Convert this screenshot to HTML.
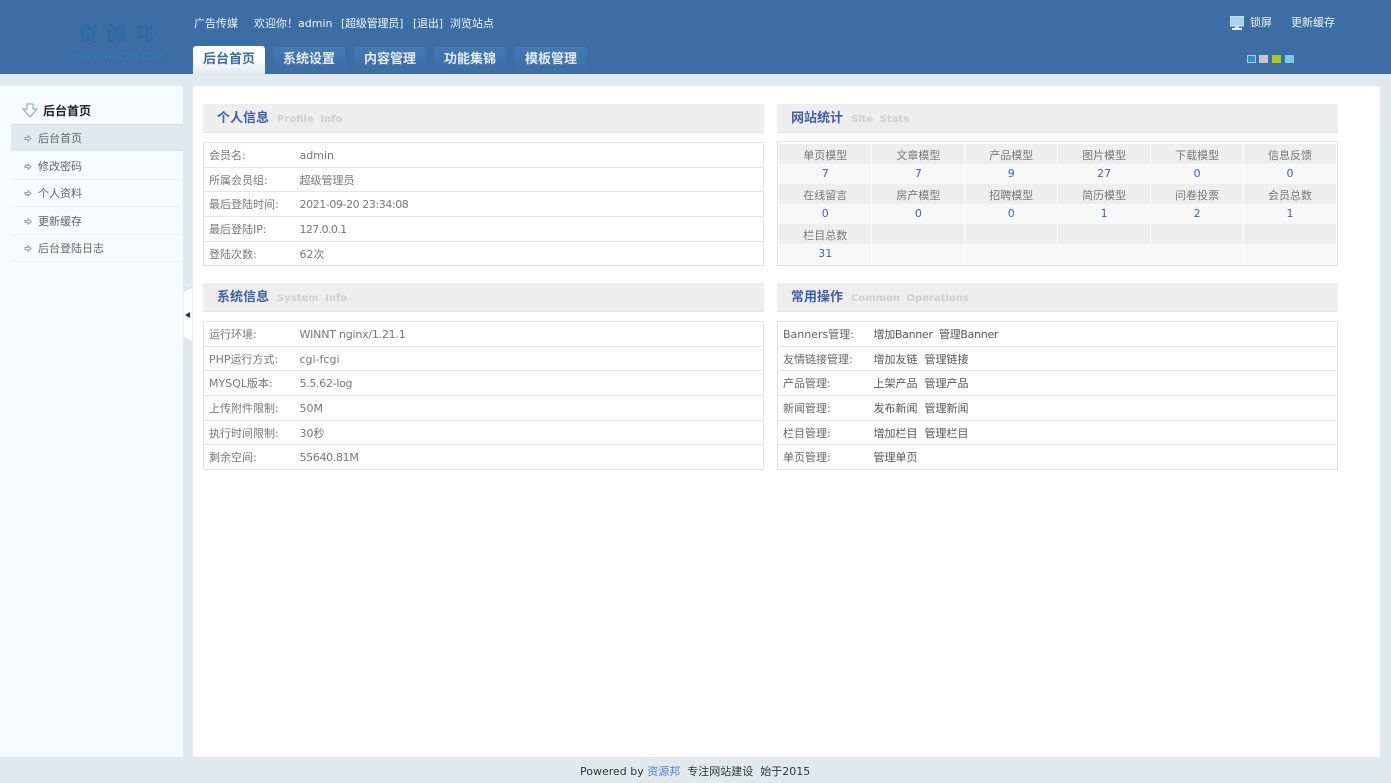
<!DOCTYPE html>
<html lang="zh"><head><meta charset="utf-8"><title>后台首页</title>
<style>
*{margin:0;padding:0;box-sizing:border-box}
html,body{width:1391px;height:783px;overflow:hidden;background:#e2e9ec}
body{position:relative;font:11px/16px "DejaVu Sans","WenQuanYi Zen Hei","Noto Sans CJK SC",sans-serif;color:#666}
.a{position:absolute;white-space:nowrap}
#top{left:0;top:0;width:1391px;height:74px;background:#3c6ea5}
.w{color:#eef3f8}
.tab{position:absolute;top:47px;height:27px;width:72px;border-radius:3px 3px 0 0;background:linear-gradient(#4479b2,#3a6ea4);color:#e4edf5;font-weight:bold;font-size:13px;line-height:26px;text-align:center}
.tab.on{top:46px;height:28px;background:linear-gradient(#fff 45%,#e2e9ec);color:#3c6ea5;line-height:27px}
#side{left:0;top:86px;width:183px;height:671px;background:#f7fbfd}
#main{left:193px;top:86px;width:1187px;height:671px;background:#fff}
.m{position:absolute;left:11px;width:172px;height:28px;border-bottom:1px solid #edf1f3;line-height:29px;padding-left:27px;color:#666}
.m svg{position:absolute;left:13px;top:11px}
.h{position:absolute;height:29px;width:561px;background:#eee;border-bottom:1px solid #e6e6e6;padding-left:14px;line-height:30px;font-weight:bold;font-size:13px;color:#3f5fa8;white-space:nowrap}
.h span{color:#cfcfcf;font-size:10px;margin-left:8px;word-spacing:3px}
.t{position:absolute;border-collapse:collapse;table-layout:fixed;width:561px;border:1px solid #e2e2e2;background:#fff}
.t td{border-top:1px solid #e6e6e6;height:24.7px;padding:2px 0 0;white-space:nowrap;vertical-align:middle}
.t td:first-child{width:96px;padding-left:5px;color:#777}
.t td+td{color:#777}
.t.c td:first-child{color:#666}.t.c td+td{color:#555}
.s{position:absolute;left:777px;top:141px;width:561px;height:125px;border:1px solid #e2e2e2;background:#fff;padding:2px 0 2px 1px}
.s table{width:100%;height:100%;border-collapse:collapse;table-layout:fixed}
.s td{text-align:center;height:20px;border-right:1px solid #fff;white-space:nowrap;padding:0}
.s tr:nth-child(odd) td{background:#eee;color:#777;padding-top:3px}
.s tr:nth-child(even) td{background:#f8f8f8;color:#4a62a8}
</style></head><body>
<div id="top" class="a"></div>
<div class="a" style="left:78px;top:19px;font:bold 20px/28px 'Noto Serif CJK SC',serif;letter-spacing:8px;color:#2c6aa3">资源邦</div>
<div class="a" style="left:74px;top:48px;font-size:11px;color:#2f7ab8">www.wzcyb.com</div>
<div class="a w" style="left:194px;top:16px">广告传媒</div>
<div class="a w" style="left:254px;top:16px">欢迎你！admin</div>
<div class="a w" style="left:341px;top:16px;letter-spacing:-.2px">[超级管理员]</div>
<div class="a w" style="left:413px;top:16px;letter-spacing:-.2px">[退出]</div>
<div class="a w" style="left:450px;top:16px">浏览站点</div>
<div class="tab on" style="left:193px">后台首页</div>
<div class="tab" style="left:273px">系统设置</div>
<div class="tab" style="left:354px">内容管理</div>
<div class="tab" style="left:434px">功能集锦</div>
<div class="tab" style="left:515px">模板管理</div>
<svg class="a" style="left:1230px;top:16px" width="14" height="15" viewBox="0 0 14 15"><rect x="0" y="0" width="14" height="10" fill="#a9d2f2" stroke="#dcecf8"/><rect x="5" y="10" width="4" height="2" fill="#c8d8e4"/><rect x="2" y="12" width="10" height="2" fill="#e6eef4"/></svg>
<div class="a w" style="left:1250px;top:15px">锁屏</div>
<div class="a w" style="left:1291px;top:15px">更新缓存</div>
<div class="a" style="left:1247px;top:55px;width:9px;height:8px;background:#2f8fc0;border:1px solid #9fd0e8"></div>
<div class="a" style="left:1259px;top:55px;width:9px;height:8px;background:#c9c9c9"></div>
<div class="a" style="left:1272px;top:55px;width:9px;height:8px;background:#a6cc1c"></div>
<div class="a" style="left:1285px;top:55px;width:9px;height:8px;background:#7fc6ec"></div>
<div id="side" class="a"></div>
<div id="main" class="a"></div>
<svg class="a" style="left:22px;top:103px" width="16" height="15" viewBox="0 0 16 15"><path d="M5 1H11V6H15L8 14L1 6H5Z" fill="#fff" stroke="#7f9cc0"/></svg>
<div class="a" style="left:43px;top:103px;font-size:12px;font-weight:bold;color:#222">后台首页</div>
<div class="a" style="left:11px;top:124px;width:172px;height:27px;background:#e2e9ec;border-top:1px solid #d8e0e4"></div>
<div class="m" style="top:124px;border:0"><svg width="8" height="7" viewBox="0 0 8 7"><path d="M1 2.5H4V.8L7 3.5L4 6.2V4.5H1Z" fill="#fff" stroke="#999"/></svg>后台首页</div>
<div class="m" style="top:152px"><svg width="8" height="7" viewBox="0 0 8 7"><path d="M1 2.5H4V.8L7 3.5L4 6.2V4.5H1Z" fill="#fff" stroke="#999"/></svg>修改密码</div>
<div class="m" style="top:179px"><svg width="8" height="7" viewBox="0 0 8 7"><path d="M1 2.5H4V.8L7 3.5L4 6.2V4.5H1Z" fill="#fff" stroke="#999"/></svg>个人资料</div>
<div class="m" style="top:207px"><svg width="8" height="7" viewBox="0 0 8 7"><path d="M1 2.5H4V.8L7 3.5L4 6.2V4.5H1Z" fill="#fff" stroke="#999"/></svg>更新缓存</div>
<div class="m" style="top:234px"><svg width="8" height="7" viewBox="0 0 8 7"><path d="M1 2.5H4V.8L7 3.5L4 6.2V4.5H1Z" fill="#fff" stroke="#999"/></svg>后台登陆日志</div>
<svg class="a" style="left:183px;top:287px" width="10" height="56" viewBox="0 0 10 56"><path d="M10 0L0 4V50L10 56Z" fill="#fff" stroke="#d5dde1"/><path d="M2 28L7 25V31Z" fill="#333"/></svg>

<div class="h" style="left:203px;top:104px">个人信息<span>Profile Info</span></div>
<table class="t" style="left:203px;top:142px">
<tr style="border-top:0"><td>会员名:</td><td>admin</td></tr><tr><td>所属会员组:</td><td>超级管理员</td></tr><tr><td>最后登陆时间:</td><td style="letter-spacing:-.42px">2021-09-20 23:34:08</td></tr><tr><td>最后登陆IP:</td><td style="letter-spacing:-.6px">127.0.0.1</td></tr><tr><td>登陆次数:</td><td>62次</td></tr>
</table>
<div class="h" style="left:203px;top:283px">系统信息<span>System Info</span></div>
<table class="t" style="left:203px;top:321px">
<tr><td>运行环境:</td><td style="letter-spacing:-.22px">WINNT nginx/1.21.1</td></tr><tr><td>PHP运行方式:</td><td>cgi-fcgi</td></tr><tr><td>MYSQL版本:</td><td style="letter-spacing:-.3px">5.5.62-log</td></tr><tr><td>上传附件限制:</td><td>50M</td></tr><tr><td>执行时间限制:</td><td>30秒</td></tr><tr><td>剩余空间:</td><td style="letter-spacing:-.33px">55640.81M</td></tr>
</table>
<div class="h" style="left:777px;top:104px">网站统计<span>Site Stats</span></div>
<div class="s"><table>
<tr><td>单页模型</td><td>文章模型</td><td>产品模型</td><td>图片模型</td><td>下载模型</td><td>信息反馈</td></tr>
<tr><td>7</td><td>7</td><td>9</td><td>27</td><td>0</td><td>0</td></tr>
<tr><td>在线留言</td><td>房产模型</td><td>招聘模型</td><td>简历模型</td><td>问卷投票</td><td>会员总数</td></tr>
<tr><td>0</td><td>0</td><td>0</td><td>1</td><td>2</td><td>1</td></tr>
<tr><td>栏目总数</td><td></td><td></td><td></td><td></td><td></td></tr>
<tr><td>31</td><td></td><td></td><td></td><td></td><td></td></tr>
</table></div>
<div class="h" style="left:777px;top:283px">常用操作<span>Common Operations</span></div>
<table class="t c" style="left:777px;top:321px">
<tr><td>Banners管理:</td><td style="letter-spacing:-.3px">增加Banner&nbsp; 管理Banner</td></tr><tr><td>友情链接管理:</td><td>增加友链&nbsp; 管理链接</td></tr><tr><td>产品管理:</td><td>上架产品&nbsp; 管理产品</td></tr><tr><td>新闻管理:</td><td>发布新闻&nbsp; 管理新闻</td></tr><tr><td>栏目管理:</td><td>增加栏目&nbsp; 管理栏目</td></tr><tr><td>单页管理:</td><td>管理单页</td></tr>
</table>
<div class="a" style="left:580px;top:764px;color:#333">Powered by <span style="color:#4f86c0">资源邦</span>&nbsp; 专注网站建设&nbsp; 始于2015</div>
</body></html>
